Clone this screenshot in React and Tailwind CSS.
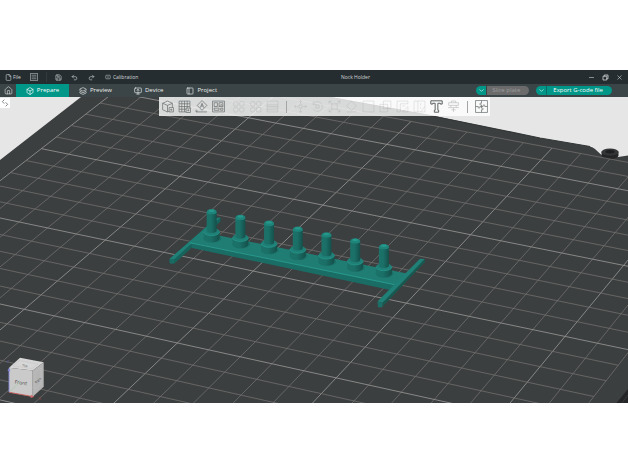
import React from 'react'
import {
  Box,
  ChevronDown,
  File,
  Home,
  Layers,
  Menu,
  Minus,
  MonitorUp,
  PanelLeft,
  Redo2,
  Save,
  SquareSplitHorizontal,
  Undo2,
  X,
} from 'lucide-react'

// plate coordinates (u across, v towards the viewer) to canvas coordinates
function project(u, v) {
  const s = (u - 5) / 15
  const t = v / 15
  const w = 1 - 0.04714 * s - 0.11752 * t
  return [(397.07 * s - 227.04 * t + 248.4) / w, (72.96 * s + 155.15 * t + 117.8) / w]
}

const columns = Array.from({ length: 23 }, (_, i) => i)
const rows = Array.from({ length: 26 }, (_, i) => i - 2)

function GridLine({ from, to, major }) {
  const [x1, y1] = project(...from)
  const [x2, y2] = project(...to)
  return (
    <line
      x1={x1}
      y1={y1}
      x2={x2}
      y2={y2}
      stroke={major ? '#8e8e8d' : '#747270'}
      strokeWidth={major ? 0.9 : 0.75}
    />
  )
}

function Peg({ x, y }) {
  return (
    <g transform={`translate(${x} ${y})`}>
      <ellipse cx="0.8" cy="29.5" rx="9" ry="4" fill="#1b7168" />
      <path d="M-8 22.800v6.500a8 4 0 0 0 16 0v-6.500z" fill="url(#peg)" />
      <ellipse cx="0" cy="22.800" rx="8" ry="3.800" fill="#1f8077" />
      <path d="M-8 22.800a8 3.800 0 0 0 16 0" fill="none" stroke="#27978b" strokeWidth="0.8" />
      <path d="M-5 3v18.500a5 2.400 0 0 0 10 0V3z" fill="url(#peg)" />
      <path d="M-5 3.200c0-4.400 10-4.400 10 0a5 2 0 0 1-10 0z" fill="#1e8479" />
      <ellipse cx="0" cy="1.700" rx="3" ry="1.200" fill="#27988c" />
    </g>
  )
}

function NockHolder() {
  return (
    <g>
      <path d="M169.500 259l47-41 4-.6v4L174.700 263.300h-5z" fill="#17625b" />
      <path d="M169.500 259l47-41 4-.6-46.500 42z" fill="#1f8077" />
      <path d="M169.500 259h4.700v4.500h-4.200z" fill="#1a6b63" />
      <path d="M191 243l206.500 42-7 5-198.500-42z" fill="#1a6d65" />
      <path d="M190 242.500l16-14 8 6 193 39-9.500 12z" fill="#1f7d74" />
      <path d="M190 242.700l207.500 42.500" stroke="#29998d" strokeWidth="1.100" fill="none" />
      {[0, 1, 2, 3, 4, 5, 6].map((i) => (
        <Peg key={i} x={211.7 + i * 28.7} y={209 + i * 5.85} />
      ))}
      <path d="M382.500 302.500l42.200-43.500v3.200l-42.200 44.500z" fill="#175850" />
      <path d="M377.500 301.500l42.500-42.700 4.700.3-42.200 43.700z" fill="#1f8077" />
      <path d="M377.500 301.500l5 1.300v4.500h-4.500z" fill="#1a7067" />
    </g>
  )
}

function ViewCube() {
  return (
    <g fontFamily="'Open Sans', sans-serif">
      <path d="M9 367.700L20 357.700l23.700 4.600-11 8.200z" fill="#d6d6d6" />
      <path d="M9 367.700l23.700 2.800v26.200L9 392.300z" fill="#cacaca" />
      <path d="M32.700 370.500l11-8.200v24.400l-11 10z" fill="#b5b5b5" />
      <path d="M13 366l6-5.500 19 3.500-6 4.500zM35 372.500l6-4.500v16l-6 5.500z" fill="none" stroke="#c2c2c2" strokeWidth="0.5" />
      <text x="14.500" y="383.500" fontSize="5" fill="#454545" transform="rotate(8 14.500 383.500)">Front</text>
      <text x="22" y="366" fontSize="3" fill="#454545" transform="rotate(11 22 366)">Top</text>
      <text x="36" y="383.500" fontSize="3" fill="#454545" transform="rotate(-40 36 383.500)">Right</text>
      <path d="M9 392.300l11.500-11" stroke="#9bc79c" strokeWidth="0.6" />
      <path d="M9 392.300v-22" stroke="#8486d8" strokeWidth="0.9" />
      <path d="M7.500 371l1.500-3.500 1.500 3.500z" fill="#8486d8" />
      <path d="M9 392.300l22.500 4" stroke="#c9615f" strokeWidth="0.9" />
      <path d="M31 394.800l3.200 1.900-3.600 1.300z" fill="#d46b68" />
      <text x="7" y="363" fontSize="4" fill="#5b5d9c">Z</text>
      <text x="38.500" y="400" fontSize="4" fill="#a04a48">X</text>
    </g>
  )
}

function Scene() {
  return (
    <svg
      viewBox="0 97 628 306"
      preserveAspectRatio="xMidYMid slice"
      className="block w-full h-full"
      role="img"
      aria-label="Nock Holder on the build plate"
    >
      <defs>
        <linearGradient id="peg" x1="0" x2="1" y1="0" y2="0">
          <stop offset="0" stopColor="#1c7269" />
          <stop offset="0.45" stopColor="#1a6f67" />
          <stop offset="1" stopColor="#154f4a" />
        </linearGradient>
      </defs>
      <rect x="0" y="97" width="628" height="306" fill="#e6e6e6" />
      <path d="M0 160L81 97h249l102 18.500 108 22.500 50 8.500q3 .5 5 2.500l7 6.500 16 1.500 10-1.500v248H0z" fill="#3c3f40" />
      <path d="M328 97l102 18.500 110 22.500 50 8.500" fill="none" stroke="#343738" strokeWidth="1.200" />
      <path d="M601.500 151.500v4a8.500 3.500 0 0 0 17 0v-4z" fill="#242627" />
      <ellipse cx="610" cy="152" rx="8.500" ry="3.600" fill="#343637" />
      <ellipse cx="610" cy="151.800" rx="4.500" ry="1.700" fill="#1d1f20" />
      <path d="M628 389l-11.500 14H628z" fill="#232526" />
      <path d="M628 395l-6 8" stroke="#3c3f40" strokeWidth="0.8" />
      {columns.map((u) => (
        <GridLine key={`c${u}`} from={[u, -2]} to={[u, 23]} major={u % 5 === 0} />
      ))}
      {rows.map((v) => (
        <GridLine key={`r${v}`} from={[0, v]} to={[22, v]} major={v % 5 === 0} />
      ))}
      <NockHolder />
      <ViewCube />
    </svg>
  )
}

const tools = [
  { name: 'Add', art: <><path d="M3 6l9-4 9 4v12l-9 4-9-4zM3 6l9 4 9-4M12 10v12" /><path d="M15 14h8v8h-8z" fill="#e0e0e0" /><path d="M19 16v4M17 18h4" /></> },
  { name: 'Add plate', art: <><path d="M2 2h20v20H2zM7 2v20M12 2v20M17 2v20M2 7h20M2 12h20M2 17h20" /><path d="M15 15h8v8h-8z" fill="#e0e0e0" /><path d="M19 17v4M17 19h4" /></> },
  { name: 'Auto orient', art: <><path d="M13 1l9 9-9 9-9-9zM10 14l3-8 3 8M11 11h4M2 22h20M2 22v-4M2 22l3-2" /></> },
  { name: 'Arrange', art: <><path d="M1 2h22v20H1zM4 5h6v7H4zM4 15h9v4H4zM13 5h7v7h-7zM16 15h4v4h-4zM13 12l4-4 3 4" /></> },
  { name: 'Split to objects', off: true, first: true, art: <><circle cx="7" cy="7" r="4.500" /><circle cx="18" cy="7" r="4.500" /><circle cx="7" cy="18" r="4.500" /><circle cx="18" cy="18" r="4.500" /></> },
  { name: 'Split to parts', off: true, art: <><circle cx="7" cy="7" r="4.500" /><circle cx="18" cy="7" r="4.500" /><circle cx="7" cy="18" r="4.500" /><path d="M14 14h8v8h-8z" /></> },
  { name: 'Variable layer height', off: true, art: <><path d="M2 2h20v20H2zM2 9h20M2 15h20M2 12h20M2 18h20" /></> },
  { divider: true },
  { name: 'Move', off: true, art: <><path d="M12 1v6M12 17v6M1 12h6M17 12h6M9 4l3-3 3 3M9 20l3 3 3-3M4 9l-3 3 3 3M20 9l3 3-3 3M9 9h6v6H9z" /></> },
  { name: 'Rotate', off: true, art: <><path d="M4 8a9 9 0 1 1 0 8M4 3v5h5M9 9h6v6H9z" /></> },
  { name: 'Scale', off: true, art: <><path d="M7 7h10v10H7zM2 7V2h5M17 2h5v5M22 17v5h-5M7 22H2v-5M2 2l5 5M22 2l-5 5M22 22l-5-5M2 22l5-5" /></> },
  { name: 'Lay on face', off: true, art: <><path d="M12 2l9 9-9 8-9-8zM3 22h18" /></> },
  { name: 'Cut', off: true, art: <path d="M2 2h20v20H2z" /> },
  { name: 'Mesh boolean', off: true, art: <path d="M2 8h14v14H2zM8 2h14v14H8z" /> },
  { name: 'Support painting', off: true, art: <path d="M2 2h20v5H8v15H2zM12 22l10-10v10zM12 11h5" /> },
  { name: 'Seam painting', off: true, art: <path d="M2 2h20v20H2zM9 2v20M14 22l8-10M14 6v4M14 13v3" /> },
  { name: 'Text', strong: true, art: <path d="M1.500 1.500h21v6h-3.500V6h-4.500v13H16v3.500H8V19h1.500V6H5v1.500H1.500z" /> },
  { name: 'Measure', off: true, soft: true, art: <path d="M3 5h18v5H3zM8 5V2h8v3M7 10v4h10v-4M12 14v8M2 14h5M17 14h5M8 18h8" /> },
  { divider: true },
  { name: 'Assembly view', art: <><path d="M1 1h22v22H1z" /><path d="M12 1v5q-3-1-3 1.500T12 9v6q3-1 3 1.500T12 18v5M1 12h5q-1 3 1.500 3T9 12h6q-1-3 1.500-3T18 12h5" /></> },
]

function toolColor(tool) {
  if (tool.soft) return 'text-[#c4c4c4]'
  if (tool.off) return 'text-[#8a8a8a]/25'
  return tool.strong ? 'text-[#565b5e]' : 'text-[#707476]'
}

function Toolbar() {
  return (
    <div className="absolute inset-x-0 top-0 flex justify-center pl-[21px]">
      <div className="flex h-[19px] items-center gap-1 bg-white/80 px-[2px]" role="toolbar" aria-label="Model tools">
        {tools.map((tool, i) =>
          tool.divider ? (
            <span key={i} className="mx-[3px] h-3 w-px bg-[#a5a5a5]" />
          ) : (
            <button
              key={tool.name}
              type="button"
              aria-label={tool.name}
              disabled={tool.off}
              className={`${toolColor(tool)} ${tool.first ? 'ml-[3px]' : ''}`}
            >
              <svg viewBox="0 0 24 24" className="block size-[13px]" fill="none" stroke="currentColor" strokeWidth={tool.strong ? 1.8 : 1.4}>
                {tool.art}
              </svg>
            </button>
          )
        )}
      </div>
    </div>
  )
}

function TitleBar() {
  return (
    <header className="grid h-[14px] grid-cols-3 items-center bg-[#252d30] text-[5px] leading-[7px] text-[#d3d6d7]">
      <div className="flex items-center pl-[5px]">
        <button type="button" className="flex items-center gap-px">
          <File className="size-[7px]" />
          File
        </button>
        <button type="button" aria-label="Menu" className="ml-[10px] flex size-[6px] items-center justify-center outline outline-[#7d8487]">
          <Menu className="size-[6px]" />
        </button>
        <span className="ml-[9px] h-[10px] w-px bg-[#33393c]" />
        <button type="button" aria-label="Save" className="ml-2">
          <Save className="size-[7px]" />
        </button>
        <button type="button" aria-label="Undo" className="ml-[9px]">
          <Undo2 className="size-[7px]" />
        </button>
        <button type="button" aria-label="Redo" className="ml-[10px]">
          <Redo2 className="size-[7px]" />
        </button>
        <button type="button" className="ml-[10px] flex items-center gap-[2px]">
          <SquareSplitHorizontal className="size-[6px]" />
          Calibration
        </button>
      </div>
      <h1 className="text-center pl-[83px] whitespace-nowrap">Nock Holder</h1>
      <div className="flex justify-end gap-[7px] pr-[5px]">
        <button type="button" aria-label="Minimize"><Minus className="size-[7px]" /></button>
        <button type="button" aria-label="Restore">
          <svg viewBox="0 0 14 14" className="size-[7px]" fill="none" stroke="currentColor" strokeWidth="1.600">
            <path d="M2 4.500h7.500V12H2zM4.500 4.500V2H12v7.500H9.500" />
          </svg>
        </button>
        <button type="button" aria-label="Close"><X className="size-[7px]" /></button>
      </div>
    </header>
  )
}

function SplitButton({ label, disabled }) {
  return (
    <div className="flex h-[9px] overflow-hidden rounded-full">
      <button type="button" aria-label={`${label} options`} className="flex w-[10px] items-center justify-center bg-[#009688] text-white">
        <ChevronDown className="size-[7px]" />
      </button>
      <button
        type="button"
        disabled={disabled}
        className={
          disabled
            ? 'border-l border-[#3b4446] bg-[#6b6b6b] pl-[5px] pr-[9px] text-[#9c9c9c]'
            : 'border-l border-[#0b6e66] bg-[#009688] pl-[6px] pr-[9px] font-medium text-white'
        }
      >
        {label}
      </button>
    </div>
  )
}

function TabBar() {
  return (
    <nav className="flex h-[13px] items-center bg-[#3b4446] text-[6px] leading-[9px] font-medium text-[#eceeee]">
      <button type="button" aria-label="Home" className="flex w-4 justify-center">
        <Home className="size-[9px]" strokeWidth={1.5} />
      </button>
      <button type="button" aria-current="page" className="flex h-full w-[53px] items-center justify-center gap-[3px] bg-[#009688] text-white">
        <Box className="size-[8px]" />
        Prepare
      </button>
      <button type="button" className="ml-[10px] flex items-center gap-[3px]">
        <Layers className="size-[8px]" />
        Preview
      </button>
      <button type="button" className="ml-[22px] flex items-center gap-[3px]">
        <MonitorUp className="size-[8px]" />
        Device
      </button>
      <button type="button" className="ml-[23px] flex items-center gap-[3px]">
        <PanelLeft className="size-[8px]" />
        Project
      </button>
      <div className="ml-auto flex gap-[7px] pr-4">
        <SplitButton label="Slice plate" disabled />
        <SplitButton label="Export G-code file" />
      </div>
    </nav>
  )
}

export default function App() {
  return (
    <div className="flex min-h-screen flex-col bg-white py-[70px] font-['Open_Sans','Noto_Sans',sans-serif]">
      <TitleBar />
      <TabBar />
      <main className="relative flex-1 overflow-hidden">
        <div className="h-full">
          <Scene />
        </div>
        <Toolbar />
        <button type="button" aria-label="Expand sidebar" className="absolute left-0 top-px flex size-[10px] items-center justify-center bg-white text-[#666]">
          <svg viewBox="0 0 12 12" className="size-[8px]" fill="none" stroke="currentColor" strokeWidth="1.200">
            <path d="M5 1L2 4l3 3M7 5l3 3-3 3" />
          </svg>
        </button>
      </main>
    </div>
  )
}
